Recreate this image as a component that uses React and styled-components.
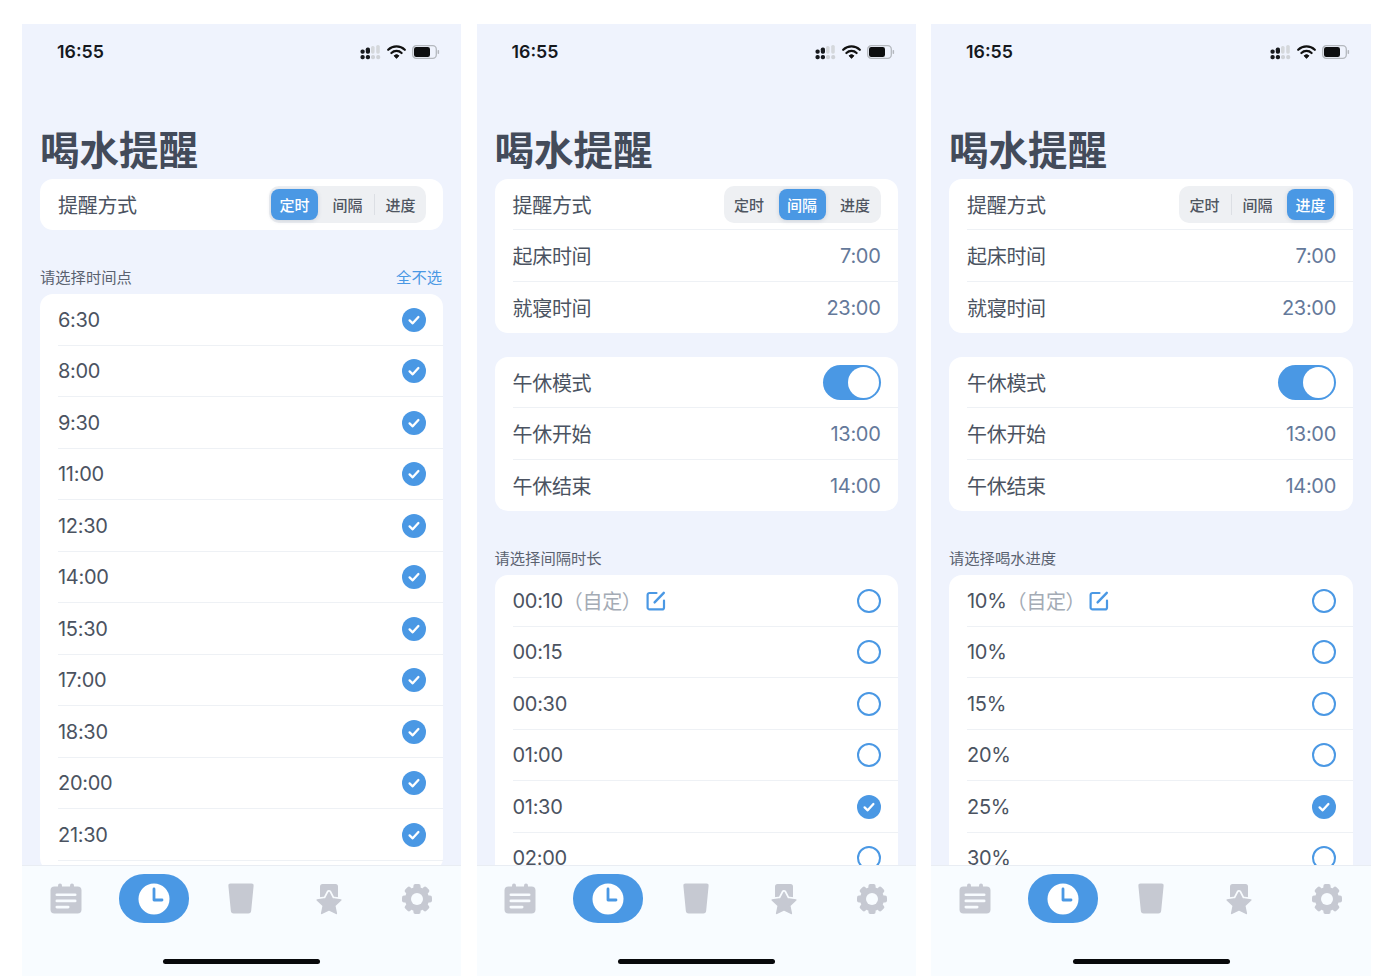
import React from 'react';
import styled, { createGlobalStyle } from 'styled-components';

const BLUE = '#4a98e4';
const ICON_GREY = '#c6c9d2';
const BAR_BG = '#f8fcff';

const GlobalStyle = createGlobalStyle`
  html, body {
    margin: 0;
    padding: 0;
    background: #ffffff;
    font-family: "Inter", "Noto Sans CJK SC", sans-serif;
  }
`;

const Page = styled.div`
  display: grid;
  grid-template-columns: 439px 439px 440px;
  grid-template-rows: minmax(0, 1fr);
  column-gap: 15.5px;
  height: 976px;
  padding: 24px 0 0 22px;
  box-sizing: border-box;
  overflow: hidden;
`;

const Phone = styled.div`
  min-width: 0;
  min-height: 0;
  display: flex;
  flex-direction: column;
  background: #eff3fd;
`;

const StatusBar = styled.div`
  flex: none;
  height: 56px;
  display: flex;
  align-items: center;
  justify-content: space-between;
  padding: 0 21px 0 35px;
`;

const Clock = styled.span`
  font-size: 17.8px;
  font-weight: 600;
  color: #15181d;
  margin-bottom: 2px;
`;

const StatusIcons = styled.div`
  display: flex;
  align-items: center;
  gap: 6px;
`;

const Content = styled.div`
  flex: 1;
  min-height: 0;
  overflow: hidden;
  padding: 0 18px;
`;

const Title = styled.h1`
  margin: 47px 0 3.6px;
  font-size: 39.5px;
  line-height: 48px;
  font-weight: 700;
  color: #434b5a;
`;

const Card = styled.div`
  background: #ffffff;
  border-radius: 13px;
  margin-bottom: ${p => (p.$spaced ? '23.5px' : '0')};
  padding-bottom: ${p => (p.$open ? '10px' : '0')};
`;

const Row = styled.div`
  height: 51.5px;
  box-sizing: border-box;
  margin-left: 18px;
  padding: 1px 17px 0 0;
  display: flex;
  align-items: center;
  justify-content: space-between;
  font-size: 20px;
  letter-spacing: -0.3px;
  color: #4b5361;
  border-bottom: ${p => (p.$last ? 'none' : '1px solid #eef1f5')};
`;

const Value = styled.span`
  color: #64799a;
`;

const RowLabel = styled.span`
  display: flex;
  align-items: center;
`;

const Muted = styled.span`
  color: #a4abb5;
`;

const Segments = styled.div`
  display: flex;
  gap: 6px;
  padding: 3px 2px;
  background: #eef0f3;
  border-radius: 10px;
`;

const Segment = styled.div`
  position: relative;
  width: 47px;
  height: 31px;
  display: flex;
  align-items: center;
  justify-content: center;
  border-radius: 8px;
  font-size: 15px;
  font-weight: 500;
  letter-spacing: 0;
  color: ${p => (p.$active ? '#ffffff' : '#4f5661')};
  background: ${p => (p.$active ? BLUE : 'transparent')};
  box-shadow: ${p => (p.$active ? '0 1px 4px rgba(60, 80, 110, 0.18)' : 'none')};

  &::before {
    content: ${p => (p.$divider ? '""' : 'none')};
    position: absolute;
    left: -3.5px;
    top: 5px;
    bottom: 5px;
    width: 1px;
    background: #dcdfe4;
  }
`;

const SectionHead = styled.div`
  margin: 38px 1px 6px 0;
  display: flex;
  justify-content: space-between;
  font-size: 15.3px;
  line-height: 20px;
  color: #5a6270;
`;

const HeadLink = styled.span`
  color: ${BLUE};
`;

const Toggle = styled.div`
  width: 58px;
  height: 35px;
  padding: 2px;
  box-sizing: border-box;
  border-radius: 18px;
  background: ${BLUE};
  display: flex;
  justify-content: flex-end;
`;

const Knob = styled.div`
  width: 31px;
  height: 31px;
  border-radius: 50%;
  background: #ffffff;
`;

const Radio = styled.div`
  width: 24px;
  height: 24px;
  box-sizing: border-box;
  border-radius: 50%;
  border: 2.5px solid ${BLUE};
`;

const Checked = styled.div`
  width: 24px;
  height: 24px;
  border-radius: 50%;
  background: ${BLUE};
  display: flex;
  align-items: center;
  justify-content: center;
`;

const TabBar = styled.div`
  flex: none;
  height: 111px;
  background: ${BAR_BG};
  border-top: 1px solid #e9edf3;
  box-sizing: border-box;
  display: flex;
  flex-direction: column;
  align-items: center;
`;

const Tabs = styled.div`
  align-self: stretch;
  display: grid;
  grid-template-columns: repeat(5, 1fr);
  padding-top: 8px;
  height: 49px;
`;

const Tab = styled.div`
  display: flex;
  align-items: center;
  justify-content: center;
`;

const Pill = styled.div`
  width: 70px;
  height: 49px;
  border-radius: 25px / 24px;
  background: ${BLUE};
  display: flex;
  align-items: center;
  justify-content: center;
`;

const HomeIndicator = styled.div`
  margin-top: 36px;
  width: 157px;
  height: 5px;
  border-radius: 3px;
  background: #08090b;
`;

const CheckIcon = () => (
  <svg width="14" height="14" viewBox="0 0 14 14" fill="none">
    <path d="M2.6 7.4 5.7 10.3 11.4 4" stroke="#fff" strokeWidth="2.3" strokeLinecap="round" strokeLinejoin="round" />
  </svg>
);

const EditIcon = () => (
  <svg width="20" height="20" viewBox="0 0 20 20" fill="none" style={{ marginLeft: 4 }}>
    <path d="M10.5 2H3.6A2 2 0 0 0 1.6 4v12.4a2 2 0 0 0 2 2H16a2 2 0 0 0 2-2V9.5" stroke={BLUE} strokeWidth="2.2" strokeLinecap="round" />
    <path d="M8.6 11.4 17.8 1.8" stroke={BLUE} strokeWidth="2.4" strokeLinecap="round" />
  </svg>
);

const SignalIcon = () => (
  <svg width="21" height="15" viewBox="0 0 21 15">
    <rect x="0.5" y="4.5" width="4.2" height="4.2" rx="1.8" fill="#17191d" />
    <rect x="0.5" y="10" width="4.2" height="4.2" rx="1.8" fill="#17191d" />
    <rect x="5.8" y="2.5" width="4.2" height="6.2" rx="1.8" fill="#17191d" />
    <rect x="5.8" y="10" width="4.2" height="4.2" rx="1.8" fill="#17191d" />
    <rect x="11" y="1" width="3.6" height="7.7" rx="1.6" fill="#d5d8dc" />
    <rect x="11" y="10" width="4" height="4.2" rx="1.8" fill="#cfd2d7" />
    <rect x="16.2" y="0" width="3.6" height="8.7" rx="1.6" fill="#d5d8dc" />
    <rect x="16.2" y="10" width="4" height="4.2" rx="1.8" fill="#cfd2d7" />
  </svg>
);

const WifiIcon = () => (
  <svg width="19" height="14" viewBox="0 0 19 14" fill="none">
    <path d="M1.2 4.8a11.8 11.8 0 0 1 16.6 0" stroke="#111" strokeWidth="2.2" strokeLinecap="round" />
    <path d="M4.4 8a7.3 7.3 0 0 1 10.2 0" stroke="#111" strokeWidth="2.2" strokeLinecap="round" />
    <path d="M7 10.8a3.6 3.6 0 0 1 5 0L9.5 13.4z" fill="#111" stroke="#111" strokeWidth="0.8" strokeLinejoin="round" />
  </svg>
);

const BatteryIcon = () => (
  <svg width="28" height="14" viewBox="0 0 28 14" fill="none">
    <rect x="0.7" y="0.7" width="23.6" height="12.6" rx="3.6" stroke="#b4b8be" strokeWidth="1.3" />
    <rect x="2" y="2" width="16" height="10" rx="2.2" fill="#0d0e10" />
    <rect x="25.6" y="5" width="1.5" height="4" rx="0.7" fill="#b4b8be" />
  </svg>
);

const CalendarIcon = () => (
  <svg width="32" height="31" viewBox="0 0 32 31">
    <rect x="0.5" y="3.5" width="31" height="27" rx="4" fill={ICON_GREY} />
    <rect x="8" y="0.5" width="4" height="6" rx="2" fill={ICON_GREY} />
    <rect x="20" y="0.5" width="4" height="6" rx="2" fill={ICON_GREY} />
    <rect x="5.5" y="10.5" width="21" height="2.6" rx="1.3" fill={BAR_BG} />
    <rect x="5.5" y="16.6" width="21" height="2.6" rx="1.3" fill={BAR_BG} />
    <rect x="5.5" y="22.8" width="14" height="2.6" rx="1.3" fill={BAR_BG} />
  </svg>
);

const ClockIcon = () => (
  <svg width="32" height="32" viewBox="0 0 32 32">
    <circle cx="16" cy="16" r="15.5" fill="#fff" />
    <path d="M16 6V17H24" fill="none" stroke={BLUE} strokeWidth="2.8" strokeLinecap="round" strokeLinejoin="round" />
  </svg>
);

const CupIcon = () => (
  <svg width="26" height="31" viewBox="0 0 26 31">
    <path d="M2.6.5H23.4a2.2 2.2 0 0 1 2.2 2.4L23.2 27.6a3 3 0 0 1-3 2.9H5.8a3 3 0 0 1-3-2.9L.4 2.9A2.2 2.2 0 0 1 2.6.5z" fill={ICON_GREY} />
  </svg>
);

const STAR = 'M14 9.5 17.3 15.9 25.8 17 19.7 22.6 21.3 30.4 14 26.7 6.7 30.4 8.3 22.6 2.2 17 10.7 15.9z';

const BadgeIcon = () => (
  <svg width="28" height="32" viewBox="0 0 28 32">
    <rect x="5" y="1" width="18" height="19" rx="2.5" fill={ICON_GREY} />
    <path d={STAR} fill={BAR_BG} stroke={BAR_BG} strokeWidth="5" strokeLinejoin="round" />
    <path d={STAR} fill={ICON_GREY} stroke={ICON_GREY} strokeWidth="1.6" strokeLinejoin="round" />
  </svg>
);

const GearIcon = () => (
  <svg width="32" height="32" viewBox="0 0 32 32">
    <circle cx="16" cy="16" r="12" fill={ICON_GREY} />
    {[0, 45, 90, 135, 180, 225, 270, 315].map(a => (
      <rect key={a} x="12.4" y="1" width="7.2" height="7" rx="2" fill={ICON_GREY} transform={`rotate(${a} 16 16)`} />
    ))}
    <circle cx="16" cy="16" r="6" fill={BAR_BG} />
  </svg>
);

const MODES = ['定时', '间隔', '进度'];

const TIMES = ['6:30', '8:00', '9:30', '11:00', '12:30', '14:00', '15:30', '17:00', '18:30', '20:00', '21:30'];

const SCREENS = [
  { mode: 0 },
  {
    mode: 1,
    heading: '请选择间隔时长',
    custom: '00:10',
    options: ['00:15', '00:30', '01:00', '01:30', '02:00'],
    selected: '01:30',
  },
  {
    mode: 2,
    heading: '请选择喝水进度',
    custom: '10%',
    options: ['10%', '15%', '20%', '25%', '30%'],
    selected: '25%',
  },
];

function ModeSwitch({ mode }) {
  return (
    <Segments>
      {MODES.map((name, i) => (
        <Segment key={name} $active={i === mode} $divider={i > 0 && i !== mode && i - 1 !== mode}>
          {name}
        </Segment>
      ))}
    </Segments>
  );
}

function Schedule() {
  return (
    <>
      <Card>
        <Row $last>提醒方式<ModeSwitch mode={0} /></Row>
      </Card>
      <SectionHead>
        <span>请选择时间点</span>
        <HeadLink>全不选</HeadLink>
      </SectionHead>
      <Card $open>
        {TIMES.map(time => (
          <Row key={time}>
            {time}
            <Checked><CheckIcon /></Checked>
          </Row>
        ))}
      </Card>
    </>
  );
}

function Interval({ screen }) {
  return (
    <>
      <Card $spaced>
        <Row>提醒方式<ModeSwitch mode={screen.mode} /></Row>
        <Row>起床时间<Value>7:00</Value></Row>
        <Row $last>就寝时间<Value>23:00</Value></Row>
      </Card>
      <Card>
        <Row>午休模式<Toggle><Knob /></Toggle></Row>
        <Row>午休开始<Value>13:00</Value></Row>
        <Row $last>午休结束<Value>14:00</Value></Row>
      </Card>
      <SectionHead>
        <span>{screen.heading}</span>
      </SectionHead>
      <Card>
        <Row>
          <RowLabel>
            {screen.custom}<Muted>（自定）</Muted>
            <EditIcon />
          </RowLabel>
          <Radio />
        </Row>
        {screen.options.map(opt => (
          <Row key={opt}>
            {opt}
            {opt === screen.selected ? <Checked><CheckIcon /></Checked> : <Radio />}
          </Row>
        ))}
      </Card>
    </>
  );
}

function Screen({ screen }) {
  return (
    <Phone>
      <StatusBar>
        <Clock>16:55</Clock>
        <StatusIcons>
          <SignalIcon />
          <WifiIcon />
          <BatteryIcon />
        </StatusIcons>
      </StatusBar>
      <Content>
        <Title>喝水提醒</Title>
        {screen.mode === 0 ? <Schedule /> : <Interval screen={screen} />}
      </Content>
      <TabBar>
        <Tabs>
          <Tab><CalendarIcon /></Tab>
          <Tab><Pill><ClockIcon /></Pill></Tab>
          <Tab><CupIcon /></Tab>
          <Tab><BadgeIcon /></Tab>
          <Tab><GearIcon /></Tab>
        </Tabs>
        <HomeIndicator />
      </TabBar>
    </Phone>
  );
}

export default function App() {
  return (
    <>
      <GlobalStyle />
      <Page>
        {SCREENS.map(screen => (
          <Screen key={screen.mode} screen={screen} />
        ))}
      </Page>
    </>
  );
}
